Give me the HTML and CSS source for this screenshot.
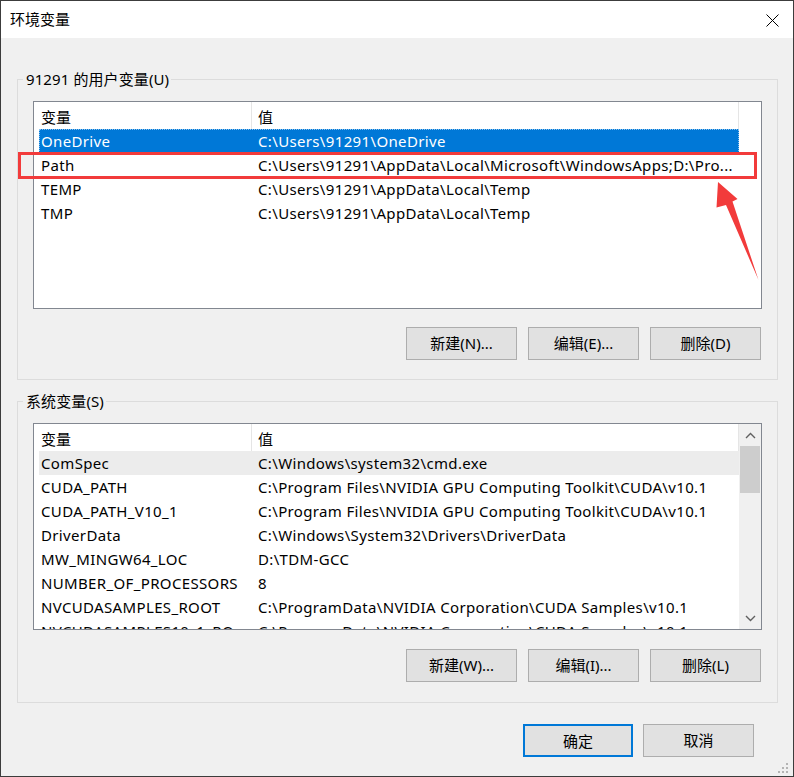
FILE: index.html
```html
<!DOCTYPE html>
<html lang="zh-CN">
<head>
<meta charset="utf-8">
<title>环境变量</title>
<link rel="stylesheet" href="styles.css">
</head>
<body>
<div class="window">
  <div class="titlebar">
    <span class="title">环境变量</span>
    <svg class="close" width="13" height="13" viewBox="0 0 13 13"><path d="M0.5 0.5L12.5 12.5M12.5 0.5L0.5 12.5" stroke="#000" stroke-width="1"/></svg>
  </div>
  <div class="content">
    <fieldset class="group">
      <legend>91291 的用户变量(U)</legend>
      <div class="list user-list">
        <div class="list-main">
          <div class="list-head"><div class="hc c1">变量</div><div class="hc c2">值</div></div>
          <div class="list-body">
            <div class="row selected"><span class="cell n">OneDrive</span><span class="cell v">C:\Users\91291\OneDrive</span></div>
            <div class="row"><span class="cell n">Path</span><span class="cell v">C:\Users\91291\AppData\Local\Microsoft\WindowsApps;D:\Pro...</span></div>
            <div class="row"><span class="cell n">TEMP</span><span class="cell v">C:\Users\91291\AppData\Local\Temp</span></div>
            <div class="row"><span class="cell n">TMP</span><span class="cell v">C:\Users\91291\AppData\Local\Temp</span></div>
          </div>
        </div>
        <div class="list-blank"></div>
      </div>
      <div class="btns">
        <button class="btn">新建(N)...</button>
        <button class="btn">编辑(E)...</button>
        <button class="btn">删除(D)</button>
      </div>
    </fieldset>

    <fieldset class="group group-sys">
      <legend>系统变量(S)</legend>
      <div class="list sys-list">
        <div class="list-main">
          <div class="list-head"><div class="hc c1">变量</div><div class="hc c2">值</div></div>
          <div class="list-body">
            <div class="row hover"><span class="cell n">ComSpec</span><span class="cell v">C:\Windows\system32\cmd.exe</span></div>
            <div class="row"><span class="cell n">CUDA_PATH</span><span class="cell v">C:\Program Files\NVIDIA GPU Computing Toolkit\CUDA\v10.1</span></div>
            <div class="row"><span class="cell n">CUDA_PATH_V10_1</span><span class="cell v">C:\Program Files\NVIDIA GPU Computing Toolkit\CUDA\v10.1</span></div>
            <div class="row"><span class="cell n">DriverData</span><span class="cell v">C:\Windows\System32\Drivers\DriverData</span></div>
            <div class="row"><span class="cell n">MW_MINGW64_LOC</span><span class="cell v">D:\TDM-GCC</span></div>
            <div class="row"><span class="cell n">NUMBER_OF_PROCESSORS</span><span class="cell v">8</span></div>
            <div class="row"><span class="cell n">NVCUDASAMPLES_ROOT</span><span class="cell v">C:\ProgramData\NVIDIA Corporation\CUDA Samples\v10.1</span></div>
            <div class="row"><span class="cell n">NVCUDASAMPLES10_1_RO...</span><span class="cell v">C:\ProgramData\NVIDIA Corporation\CUDA Samples\v10.1</span></div>
          </div>
        </div>
        <div class="scrollbar">
          <div class="sb-btn"><svg width="11" height="7" viewBox="0 0 11 7"><path d="M1 6L5.5 1.5L10 6" fill="none" stroke="#606060" stroke-width="1.4"/></svg></div>
          <div class="sb-track"><div class="sb-thumb"></div></div>
          <div class="sb-btn"><svg width="11" height="7" viewBox="0 0 11 7"><path d="M1 1L5.5 5.5L10 1" fill="none" stroke="#606060" stroke-width="1.4"/></svg></div>
        </div>
      </div>
      <div class="btns">
        <button class="btn">新建(W)...</button>
        <button class="btn">编辑(I)...</button>
        <button class="btn">删除(L)</button>
      </div>
    </fieldset>

    <div class="footer">
      <button class="btn btn-default">确定</button>
      <button class="btn">取消</button>
    </div>
  </div>

  <svg class="overlay" width="794" height="777" viewBox="0 0 794 777">
    <rect x="19.5" y="153.5" width="736" height="24" fill="none" stroke="#f23b3b" stroke-width="3"/>
    <polygon points="718,182 737.5,199 732.5,201.5 758.5,280 726,205 716.5,207.5" fill="#f23b3b"/>
    <g fill="#b4b4b4">
      <rect x="786" y="763" width="2" height="2"/>
      <rect x="782" y="767" width="2" height="2"/>
      <rect x="786" y="767" width="2" height="2"/>
      <rect x="778" y="771" width="2" height="2"/>
      <rect x="782" y="771" width="2" height="2"/>
      <rect x="786" y="771" width="2" height="2"/>
    </g>
  </svg>
</div>
</body>
</html>
```

FILE: styles.css
```css
html, body {
  margin: 0;
  padding: 0;
  background: #f0f0f0;
}

body {
  font-family: "Noto Sans", "Noto Sans CJK SC", sans-serif;
  font-size: 15px;
  color: #000;
}

.window {
  position: relative;
  width: 794px;
  height: 777px;
  box-sizing: border-box;
  border: 1px solid #3c3c3c;
  background: #f0f0f0;
  overflow: hidden;
}

.titlebar {
  height: 37px;
  background: #fff;
  display: flex;
  align-items: center;
  justify-content: space-between;
  padding: 0 14px 0 9px;
}

.title {
  font-size: 15px;
  line-height: 37px;
}

.close {
  display: block;
  margin-top: 1px;
}

.content {
  padding: 31px 15px 0 16px;
}

.group {
  margin: 0;
  padding: 11px 15px 19px 15px;
  border: 1px solid #dcdcdc;
  min-width: 0;
}

.group-sys {
  margin-top: 11px;
  padding-bottom: 20px;
}

.group legend {
  margin-left: -10px;
  padding: 0 2px 0 3px;
  line-height: 21px;
  height: 21px;
  font-size: 15px;
  letter-spacing: 0.1px;
}

.list {
  display: flex;
  height: 208px;
  box-sizing: border-box;
  border: 1px solid #828790;
  background: #fff;
}

.sys-list {
  height: 207px;
}

.list-main {
  width: 705px;
  display: flex;
  flex-direction: column;
  overflow: hidden;
}

.list-blank {
  flex: 1;
}

.list-head {
  display: flex;
  height: 27px;
  flex: none;
}

.hc {
  box-sizing: border-box;
  height: 27px;
  padding-top: 3px;
  line-height: 24px;
  border-right: 1px solid #e5e5e5;
  white-space: nowrap;
}

.hc.c1 {
  width: 218px;
  padding-left: 7px;
}

.hc.c2 {
  width: 487px;
  padding-left: 6px;
}

.list-body {
  flex: 1;
  overflow: hidden;
}

.row {
  display: flex;
  height: 24px;
  line-height: 24px;
  margin-left: 5px;
  width: 700px;
  white-space: nowrap;
}

.cell {
  overflow: hidden;
  letter-spacing: 0.35px;
}

.cell.n {
  width: 212px;
  flex: none;
  box-sizing: border-box;
  padding-left: 2px;
}

.cell.v {
  flex: 1;
  padding-left: 7px;
}

.row.selected {
  background: #0078d7;
  color: #fff;
  outline: 1px dotted rgba(255, 255, 255, 0.55);
  outline-offset: -1px;
}

.row.hover {
  background: #ececec;
}

.scrollbar {
  width: 22px;
  display: flex;
  flex-direction: column;
  background: #f0f0f0;
}

.sb-btn {
  height: 22px;
  display: flex;
  align-items: center;
  justify-content: center;
  flex: none;
}

.sb-track {
  flex: 1;
  padding: 0 1px;
}

.sb-thumb {
  height: 47px;
  background: #cdcdcd;
}

.btns {
  display: flex;
  justify-content: flex-end;
  gap: 11px;
  margin-top: 18px;
  margin-right: 1px;
}

.group-sys .btns {
  margin-top: 19px;
}

.btn {
  width: 111px;
  height: 33px;
  box-sizing: border-box;
  background: #e1e1e1;
  border: 1px solid #adadad;
  border-radius: 0;
  font-family: "Noto Sans", "Noto Sans CJK SC", sans-serif;
  font-size: 15px;
  color: #000;
  padding: 0;
  line-height: 31px;
}

.btn-default {
  width: 110px;
  border: 2px solid #0078d7;
}

.footer {
  display: flex;
  justify-content: flex-end;
  gap: 10px;
  margin-top: 21px;
  margin-right: 24px;
}

.overlay {
  position: absolute;
  left: -1px;
  top: -1px;
  pointer-events: none;
}
```
